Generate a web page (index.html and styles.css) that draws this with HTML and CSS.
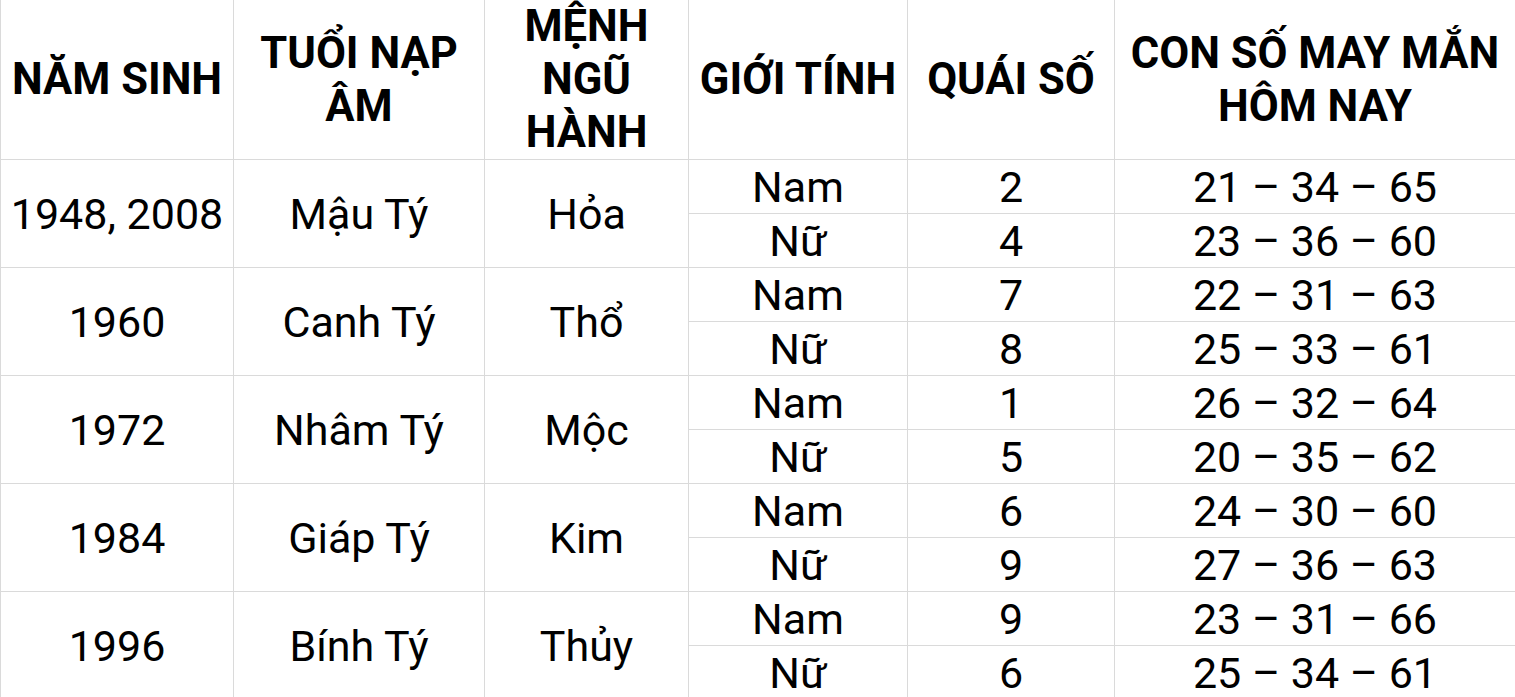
FILE: index.html
```html
<!DOCTYPE html>
<html lang="vi">
<head>
<meta charset="utf-8">
<title>Con số may mắn tuổi Tý</title>
<link rel="stylesheet" href="styles.css">
</head>
<body>
<div class="sheet">
  <div class="cell head">NĂM SINH</div>
  <div class="cell head">TUỔI NẠP ÂM</div>
  <div class="cell head">MỆNH NGŨ HÀNH</div>
  <div class="cell head">GIỚI TÍNH</div>
  <div class="cell head">QUÁI SỐ</div>
  <div class="cell head last">CON SỐ MAY MẮN HÔM NAY</div>

  <div class="cell span">1948, 2008</div>
  <div class="cell span">Mậu Tý</div>
  <div class="cell span">Hỏa</div>
  <div class="cell">Nam</div><div class="cell">2</div><div class="cell last">21 – 34 – 65</div>
  <div class="cell">Nữ</div><div class="cell">4</div><div class="cell last">23 – 36 – 60</div>

  <div class="cell span">1960</div>
  <div class="cell span">Canh Tý</div>
  <div class="cell span">Thổ</div>
  <div class="cell">Nam</div><div class="cell">7</div><div class="cell last">22 – 31 – 63</div>
  <div class="cell">Nữ</div><div class="cell">8</div><div class="cell last">25 – 33 – 61</div>

  <div class="cell span">1972</div>
  <div class="cell span">Nhâm Tý</div>
  <div class="cell span">Mộc</div>
  <div class="cell">Nam</div><div class="cell">1</div><div class="cell last">26 – 32 – 64</div>
  <div class="cell">Nữ</div><div class="cell">5</div><div class="cell last">20 – 35 – 62</div>

  <div class="cell span">1984</div>
  <div class="cell span">Giáp Tý</div>
  <div class="cell span">Kim</div>
  <div class="cell">Nam</div><div class="cell">6</div><div class="cell last">24 – 30 – 60</div>
  <div class="cell">Nữ</div><div class="cell">9</div><div class="cell last">27 – 36 – 63</div>

  <div class="cell span">1996</div>
  <div class="cell span">Bính Tý</div>
  <div class="cell span">Thủy</div>
  <div class="cell">Nam</div><div class="cell">9</div><div class="cell last">23 – 31 – 66</div>
  <div class="cell">Nữ</div><div class="cell">6</div><div class="cell last">25 – 34 – 61</div>
</div>
</body>
</html>
```
FILE: styles.css
```css
html, body {
  margin: 0;
  padding: 0;
  background: #ffffff;
  overflow: hidden;
}

body {
  width: 1515px;
  height: 697px;
  font-family: Roboto, "Liberation Sans", sans-serif;
  color: #000000;
}

.sheet {
  display: grid;
  grid-template-columns: 233px 251px 204px 219px 207px 1fr;
  grid-template-rows: 160px repeat(10, 54px);
  border-left: 1px solid #dadada;
}

.cell {
  box-sizing: border-box;
  display: flex;
  align-items: center;
  justify-content: center;
  text-align: center;
  border-right: 1px solid #dadada;
  border-bottom: 1px solid #dadada;
  font-size: 43px;
  line-height: 48px;
  font-weight: 400;
  white-space: nowrap;
}

.last {
  border-right: none;
}

.head {
  font-size: 43.5px;
  font-weight: 700;
  line-height: 53px;
  white-space: normal;
  padding: 0 4px;
}

.span {
  grid-row: span 2;
}
```
